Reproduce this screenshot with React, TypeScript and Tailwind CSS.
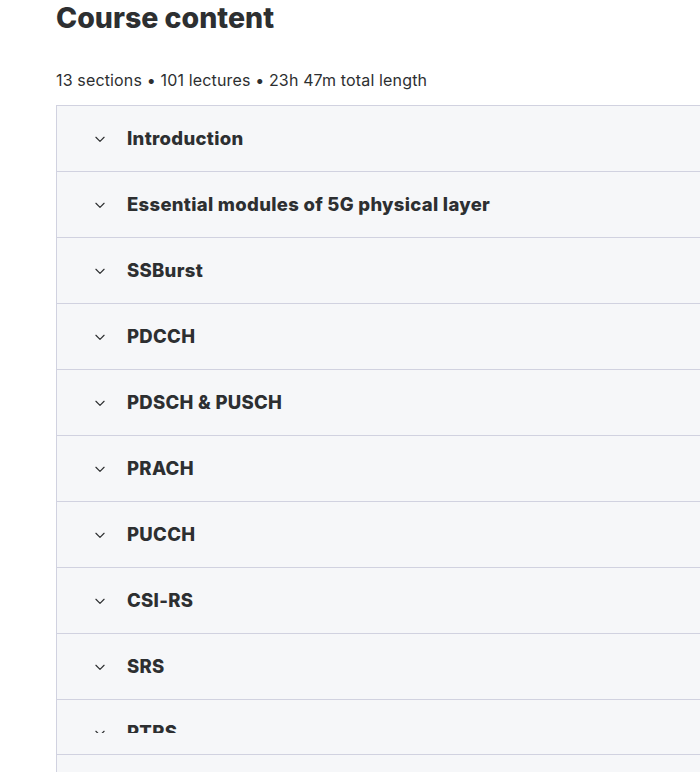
const sections = [
  "Introduction",
  "Essential modules of 5G physical layer",
  "SSBurst",
  "PDCCH",
  "PDSCH & PUSCH",
  "PRACH",
  "PUCCH",
  "CSI-RS",
  "SRS",
  "PTRS",
];

function Chevron() {
  return (
    <svg width="14" height="14" viewBox="0 0 24 24" fill="none" stroke="#2d2f31" strokeWidth="2" strokeLinecap="round" strokeLinejoin="round">
      <path d="M5 9l7 7 7-7" />
    </svg>
  );
}

function RowInner({ title }: { title: string }) {
  return (
    <div className="flex h-[66px] items-center">
      <Chevron />
      <span className="ml-[20px] text-[18.5px] font-extrabold tracking-[0.3px] text-[#2d2f31]">{title}</span>
    </div>
  );
}

function SectionRow({ title, clipped }: { title: string; clipped?: boolean }) {
  return (
    <div className={`border-b border-[#d1d2e0] bg-[#f6f7f9] pl-[36px] ${clipped ? "h-[55px]" : "h-[66px]"}`}>
      {clipped ? (
        <div className="h-[33px] overflow-hidden">
          <RowInner title={title} />
        </div>
      ) : (
        <RowInner title={title} />
      )}
    </div>
  );
}

export default function App() {
  return (
    <div className="h-[772px] overflow-hidden bg-white pl-[56px] font-['Inter',sans-serif] text-[#2d2f31]">
      <h1 className="pt-0 text-[28.5px] font-extrabold leading-[36px]">Course content</h1>
      <p className="mt-[32px] text-[16px] leading-[24px] tracking-[0.15px]">13 sections • 101 lectures • 23h 47m total length</p>
      <div className="mt-[13px] border-l border-t border-[#d1d2e0]">
        {sections.map((s, i) => (
          <SectionRow key={s} title={s} clipped={i === sections.length - 1} />
        ))}
        <div className="h-[40px] bg-[#f6f7f9]" />
      </div>
    </div>
  );
}
